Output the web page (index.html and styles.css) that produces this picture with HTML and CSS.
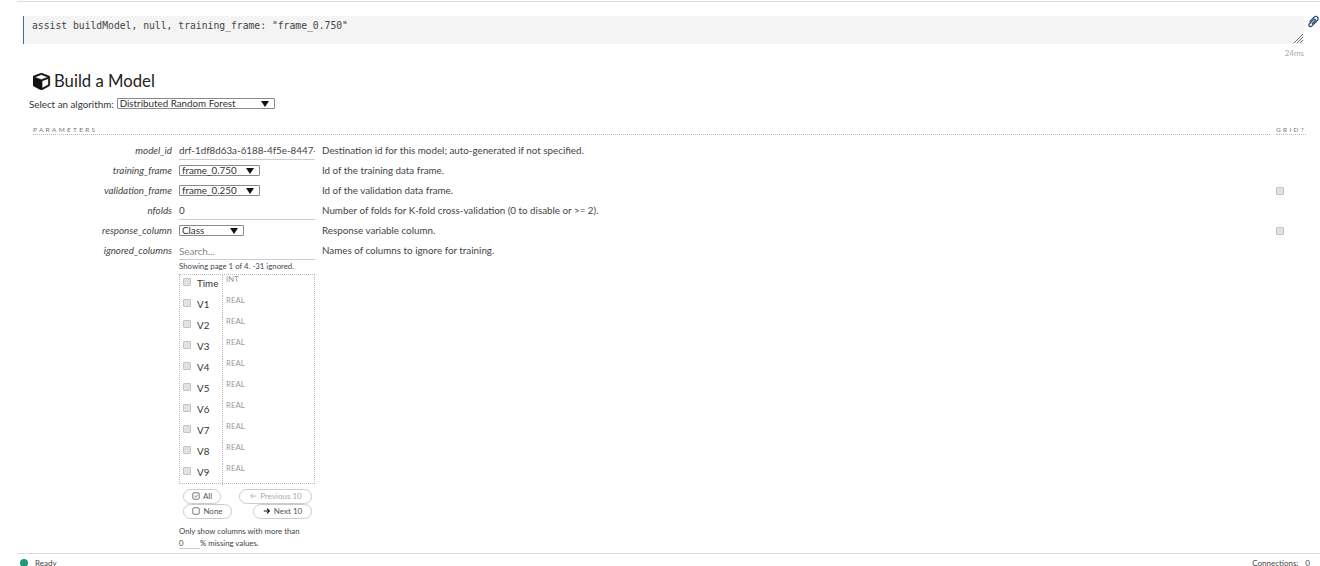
FILE: index.html
```html
<!DOCTYPE html>
<html>
<head>
<meta charset="utf-8">
<title>Build a Model</title>
<link rel="stylesheet" href="styles.css">
</head>
<body>
<div class="app">
  <main class="main">
    <section class="cell">
      <div class="code-row">
        <div class="code">assist buildModel, null, training_frame: "frame_0.750"
          <svg class="grip" viewBox="0 0 9 9"><path d="M0 9 9 0M3 9 9 3M6 9 9 6"/></svg>
        </div>
        <svg class="clip" viewBox="0 0 1792 1792"><path d="M1596 1385q0 117-79 196t-196 79q-135 0-235-100l-777-776q-113-115-113-271 0-159 110-270t269-111q158 0 273 113l605 606q10 10 10 22 0 16-30.500 46.500t-46.500 30.500q-13 0-23-10l-606-607q-79-77-181-77-106 0-179 75t-73 181q0 105 76 181l776 777q63 63 145 63 64 0 106-42t42-106q0-82-63-145l-581-581q-26-24-60-24-29 0-48 19t-19 48q0 32 25 59l410 410q10 10 10 22 0 16-31 47t-47 31q-12 0-22-10l-410-410q-63-61-63-149 0-82 57-139t139-57q88 0 149 63l581 581q100 98 100 235z"/></svg>
      </div>
      <div class="time">24ms</div>
    </section>

    <section class="form">
      <h1 class="title"><svg class="cube" viewBox="0 0 1792 1792"><path d="M896 1629l640-349v-636l-640 233v752zm-64-864l698-254-698-254-698 254zm832-252v768q0 35-18 65t-50 47l-704 384q-28 16-61 16t-61-16l-704-384q-32-17-50-47t-18-65v-768q0-40 23-73t61-48l704-256q22-8 44-8t44 8l704 256q38 15 61 48t23 73z"/></svg>Build a Model</h1>
      <div class="algo">Select an algorithm: <span class="select select-algo">Distributed Random Forest<i class="arrow"></i></span></div>

      <div class="heads">
        <div class="head head-main">PARAMETERS</div>
        <div class="head head-grid">GRID?</div>
      </div>

      <div class="row">
        <div class="label">model_id</div>
        <div class="control"><div class="input input-clip">drf-1df8d63a-6188-4f5e-8447-</div></div>
        <div class="desc">Destination id for this model; auto-generated if not specified.</div>
      </div>
      <div class="row">
        <div class="label">training_frame</div>
        <div class="control"><span class="select select-frame">frame_0.750<i class="arrow"></i></span></div>
        <div class="desc">Id of the training data frame.</div>
      </div>
      <div class="row">
        <div class="label">validation_frame</div>
        <div class="control"><span class="select select-frame">frame_0.250<i class="arrow"></i></span></div>
        <div class="desc">Id of the validation data frame.</div>
        <input class="check check-grid" type="checkbox">
      </div>
      <div class="row">
        <div class="label">nfolds</div>
        <div class="control"><div class="input">0</div></div>
        <div class="desc">Number of folds for K-fold cross-validation (0 to disable or &gt;= 2).</div>
      </div>
      <div class="row">
        <div class="label">response_column</div>
        <div class="control"><span class="select select-class">Class<i class="arrow"></i></span></div>
        <div class="desc">Response variable column.</div>
        <input class="check check-grid" type="checkbox">
      </div>
      <div class="row">
        <div class="label">ignored_columns</div>
        <div class="control">
          <div class="input input-ph">Search...</div>
          <div class="page-note">Showing page 1 of 4. -31 ignored.</div>
          <div class="cols">
            <div class="col"><div class="col-name"><input class="check" type="checkbox"><span>Time</span></div><div class="col-type">INT</div></div>
            <div class="col"><div class="col-name"><input class="check" type="checkbox"><span>V1</span></div><div class="col-type">REAL</div></div>
            <div class="col"><div class="col-name"><input class="check" type="checkbox"><span>V2</span></div><div class="col-type">REAL</div></div>
            <div class="col"><div class="col-name"><input class="check" type="checkbox"><span>V3</span></div><div class="col-type">REAL</div></div>
            <div class="col"><div class="col-name"><input class="check" type="checkbox"><span>V4</span></div><div class="col-type">REAL</div></div>
            <div class="col"><div class="col-name"><input class="check" type="checkbox"><span>V5</span></div><div class="col-type">REAL</div></div>
            <div class="col"><div class="col-name"><input class="check" type="checkbox"><span>V6</span></div><div class="col-type">REAL</div></div>
            <div class="col"><div class="col-name"><input class="check" type="checkbox"><span>V7</span></div><div class="col-type">REAL</div></div>
            <div class="col"><div class="col-name"><input class="check" type="checkbox"><span>V8</span></div><div class="col-type">REAL</div></div>
            <div class="col"><div class="col-name"><input class="check" type="checkbox"><span>V9</span></div><div class="col-type">REAL</div></div>
          </div>
          <div class="pager">
            <button class="btn btn-all"><svg class="bi" viewBox="0 0 10 10"><rect x="1" y="1" width="8" height="8" rx="1"/><path d="M3 5l1.500 1.500L7 3.500"/></svg>All</button>
            <button class="btn btn-prev"><svg class="bi" viewBox="0 0 10 10"><path d="M9 5H2M5 2 2 5l3 3"/></svg>Previous 10</button>
          </div>
          <div class="pager">
            <button class="btn btn-none"><svg class="bi" viewBox="0 0 10 10"><rect x="1" y="1" width="8" height="8" rx="1"/></svg>None</button>
            <button class="btn btn-next"><svg class="bi bi-dark" viewBox="0 0 10 10"><path d="M1 5h7M5 2l3 3-3 3"/></svg>Next 10</button>
          </div>
          <div class="missing-a">Only show columns with more than</div>
          <div class="missing-b"><span class="missing-input">0</span><span>% missing values.</span></div>
        </div>
        <div class="desc">Names of columns to ignore for training.</div>
      </div>
    </section>
  </main>

  <footer class="status">
    <div class="ready"><i class="dot"></i>Ready</div>
    <div class="conns"><span>Connections:</span><span>0</span></div>
  </footer>
</div>
</body>
</html>
```

FILE: styles.css
```css
* { box-sizing: border-box; }
html, body { margin: 0; padding: 0; height: 100%; overflow: hidden; background: #fff; }
body { font-family: Lato, "Open Sans", sans-serif; font-size: 9.800px; color: #333; }
.app { height: 566px; display: flex; flex-direction: column; padding-left: 17px; }
.main { flex: 1; min-height: 0; overflow: hidden; border-top: 1px solid #ddd; margin-top: 1px; }

.cell { padding: 14px 0 0 6px; }
.code-row { display: flex; align-items: flex-start; }
.code {
  position: relative; width: 1281px; height: 28px; padding: 4px 0 0 8px; flex: none;
  border-left: 1px solid #4a6a9a;
  font-family: "DejaVu Sans Mono", monospace; font-size: 9.720px; line-height: 12px; color: #444;
  background: repeating-linear-gradient(135deg, #f1f1f1 0, #f1f1f1 1.414px, #f8f8f8 1.414px, #f8f8f8 2.828px);
}
.grip { position: absolute; right: 1px; bottom: 1px; width: 9px; height: 9px; }
.grip path { stroke: #333; stroke-width: .7; fill: none; }
.clip { width: 13px; height: 13px; margin: -1px 0 0 3px; transform: scaleX(-1); fill: #1d3c66; stroke: #1d3c66; stroke-width: 50; flex: none; }
.time { width: 1281px; padding-top: 4px; text-align: right; font-size: 8px; line-height: 10px; color: #aaa; }

.form { padding: 12px 0 0 12px; }
.title { display: flex; align-items: center; margin: 0; padding-left: 4px; font-size: 16.700px; line-height: 22px; font-weight: 400; color: #222; }
.cube { width: 18px; height: 18px; margin-right: 3px; fill: #111; stroke: #111; stroke-width: 70; }
.algo { margin-top: 6px; height: 12px; line-height: 12px; display: flex; gap: 3px; }

.select {
  position: relative; display: inline-block; height: 11px; line-height: 9px; padding-left: 2px;
  border: 1px solid #8a8a8a; border-radius: 1px; background: #fff; color: #333; white-space: nowrap;
}
.select-algo { width: 158px; }
.select-frame { width: 81px; }
.select-class { width: 65px; }
.arrow {
  position: absolute; right: 5px; top: 2px; width: 0; height: 0;
  border-left: 4px solid transparent; border-right: 4px solid transparent; border-top: 6px solid #111;
}

.heads { display: flex; margin-top: 15px; height: 10px; font-size: 6.500px; letter-spacing: 2.300px; line-height: 9px; color: #777; }
.head { border-bottom: 1px dotted #bbb; }
.head-main { margin-left: 4px; width: 1237px; }
.head-grid { margin-left: 6px; width: 30px; white-space: nowrap; }

.row { display: flex; align-items: flex-start; min-height: 20px; }
.heads + .row { margin-top: 5px; }
.label { width: 143px; height: 20px; text-align: right; font-style: italic; line-height: 21px; color: #444; flex: none; }
.control { width: 136px; margin-left: 7px; flex: none; }
.desc { margin-left: 7px; flex: 1; line-height: 20px; color: #444; }
.input { height: 20px; line-height: 21px; border-bottom: 1px solid #ccc; color: #444; overflow: hidden; white-space: nowrap; }
.input-ph { color: #888; line-height: 22px; }
.row .select { margin-top: 5px; vertical-align: top; }

.check {
  appearance: none; -webkit-appearance: none; margin: 0; width: 8px; height: 8px; flex: none;
  background: #e2e2e2; border: 1px solid #c4c4c4; border-radius: 1px;
}
.check-grid { margin: 7px 36px 0 0; }

.page-note { margin-top: 1px; font-size: 7.800px; line-height: 10px; color: #445; white-space: nowrap; }
.cols { border: 1px dotted #bbb; margin-top: 3px; height: 210px; }
.col { display: flex; height: 21px; }
.col-name {
  display: flex; align-items: flex-start; width: 43px; padding: 2px 0 0 3px; gap: 6px;
  border-right: 1px dotted #bbb; color: #333;
}
.col-name .check { margin-top: 1px; }
.col-name span { line-height: 12px; }
.col-type { padding-left: 3px; font-size: 7.800px; line-height: 8px; color: #999; }

.pager { display: flex; justify-content: space-between; height: 15px; padding: 0 3px 0 4px; }
.cols + .pager { margin-top: 5px; }
.btn {
  display: flex; align-items: center; justify-content: center; gap: 3px; height: 15px; padding: 0 0 1px;
  border: 1px solid #ccc; border-radius: 8px; background: #fff;
  font-family: Lato, sans-serif; font-size: 8px; color: #555;
}
.btn-all { width: 38px; }
.btn-prev { width: 73px; color: #aaa; }
.btn-none { width: 49px; }
.btn-next { width: 59px; }
.bi { width: 8px; height: 8px; fill: none; stroke: #556; stroke-width: 1; }
.btn-prev .bi { stroke: #aaa; }
.bi-dark { stroke: #111; stroke-width: 1.400; }

.missing-a { margin-top: 7px; font-size: 7.800px; line-height: 10px; color: #444; white-space: nowrap; }
.missing-b { display: flex; align-items: flex-start; margin-top: 2px; font-size: 7.800px; line-height: 10px; color: #444; }
.missing-input { width: 21px; height: 11px; border-bottom: 1px solid #ccc; }

.status {
  flex: none; height: 13px; border-top: 1px solid #ddd; display: flex; justify-content: space-between;
  font-size: 8px; line-height: 19px; color: #444; overflow: hidden;
}
.ready { display: flex; align-items: flex-start; padding-left: 3px; }
.dot { width: 8px; height: 8px; margin: 5px 7px 0 0; border-radius: 50%; background: #1e9b78; }
.conns { display: flex; gap: 7px; padding-right: 10px; font-size: 8px; }
```
